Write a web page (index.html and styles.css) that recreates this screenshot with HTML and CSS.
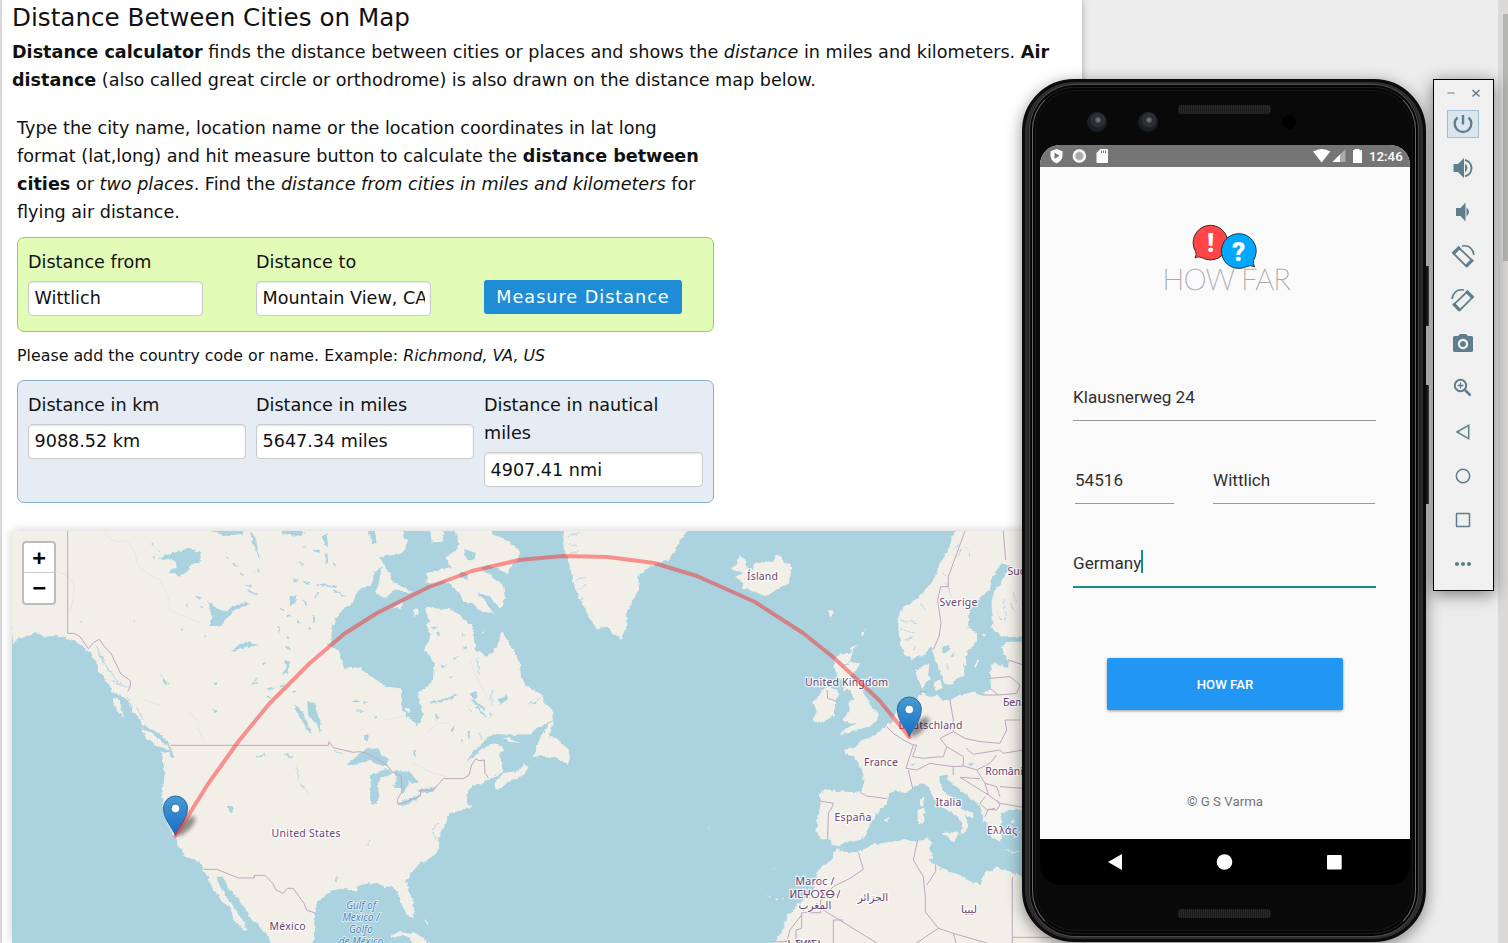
FILE: index.html
```html
<!DOCTYPE html>
<html lang="en">
<head>
<meta charset="utf-8">
<title>Distance Between Cities on Map</title>
<link rel="stylesheet" href="styles.css">
</head>
<body>
<div class="desktop">
<main class="page">
  <h1 class="title">Distance Between Cities on Map</h1>
  <p class="intro"><b>Distance calculator</b> finds the distance between cities or places and shows the <i>distance</i> in miles and kilometers. <b>Air distance</b> (also called great circle or orthodrome) is also drawn on the distance map below.</p>
  <section class="tool">
    <p class="help">Type the city name, location name or the location coordinates in lat long format (lat,long) and hit measure button to calculate the <b>distance between cities</b> or <i>two places</i>. Find the <i>distance from cities in miles and kilometers</i> for flying air distance.</p>
    <div class="panel panel-form">
      <div class="col"><label>Distance from</label><div class="field short">Wittlich</div></div>
      <div class="col"><label>Distance to</label><div class="field short"><span>Mountain View, CA</span></div></div>
      <div class="col end"><button class="measure">Measure Distance</button></div>
    </div>
    <p class="note">Please add the country code or name. Example: <i>Richmond, VA, US</i></p>
    <div class="panel panel-result">
      <div class="col"><label>Distance in km</label><div class="field">9088.52 km</div></div>
      <div class="col"><label>Distance in miles</label><div class="field">5647.34 miles</div></div>
      <div class="col"><label>Distance in nautical miles</label><div class="field low">4907.41 nmi</div></div>
    </div>
  </section>
  <div class="map">
    <svg width="1070" height="412" viewBox="12 531 1070 412">
      <defs>
        <filter id="coast" x="0" y="0" width="3300" height="1290" filterUnits="userSpaceOnUse" color-interpolation-filters="sRGB">
          <feTurbulence type="fractalNoise" baseFrequency="0.065" numOctaves="3" seed="4" result="n"/>
          <feDisplacementMap in="SourceGraphic" in2="n" scale="14" xChannelSelector="R" yChannelSelector="G"/>
        </filter>
        <linearGradient id="pinfill" x1="0" y1="0" x2="0" y2="1"><stop offset="0" stop-color="#4a9bd3"/><stop offset="1" stop-color="#126fc6"/></linearGradient>
        <filter id="soft" x="-50%" y="-100%" width="200%" height="300%"><feGaussianBlur stdDeviation="2.2"/></filter>
        <g id="pin">
          <ellipse cx="10" cy="-10" rx="13" ry="5" transform="rotate(-45 10 -10)" fill="#000" opacity=".42" filter="url(#soft)"/>
          <path d="M0 -.5C-2-7-12-16-12-28A12 12 0 0 1 12-28C12-16 2-7 0-.5Z" fill="url(#pinfill)" stroke="#2a6a9c" stroke-width="1"/>
          <circle cx="0" cy="-27.5" r="4.3" fill="#fff" stroke="#2e6c97" stroke-width=".8"/>
        </g>
      </defs>
      <g transform="translate(0 520) scale(.33333)">
        <g filter="url(#coast)">
          <g class="land">
            <!-- North American mainland -->
            <path d="M20 20L36 375 50 358 75 350 95 345 110 335 135 350 165 347 200 355 225 362 250 380 275 405 290 430 300 460 315 475 330 500 340 520 360 525 385 545 395 570 420 595 425 615 450 625 475 640 495 660 512 680 520 705 518 718 505 700 483 695 490 730 494 760 490 800 486 830 490 870 500 905 515 935 530 960 535 980 550 995 553 1010 575 1015 600 1030 610 1050 625 1075 640 1110 660 1135 665 1145 690 1160 700 1180 700 1200 720 1215 735 1235 743 1228 735 1215 720 1190 705 1165 690 1145 675 1125 660 1100 650 1070 670 1070 680 1090 690 1110 710 1130 725 1155 745 1175 745 1190 770 1210 790 1235 810 1250 815 1290 940 1290 942 1230 945 1190 950 1150 970 1130 990 1115 1015 1107 1040 1108 1060 1113 1075 1110 1065 1100 1080 1095 1110 1090 1140 1093 1155 1105 1175 1100 1190 1112 1200 1135 1205 1155 1220 1185 1235 1193 1243 1175 1240 1150 1228 1115 1218 1085 1228 1065 1260 1030 1285 1018 1310 1000 1317 985 1315 960 1320 940 1340 905 1348 880 1380 872 1415 860 1400 850 1402 820 1415 800 1440 792 1465 778 1490 770 1510 755 1505 740 1502 715 1500 700 1513 690 1505 675 1475 672 1440 690 1420 710 1400 725 1420 695 1450 670 1465 650 1490 642 1540 645 1590 643 1610 625 1640 610 1658 600 1657 565 1630 550 1630 525 1600 512 1575 490 1563 470 1560 435 1545 400 1528 370 1515 345 1506 332 1498 355 1490 385 1475 400 1458 407 1440 395 1422 385 1422 330 1415 315 1390 295 1370 280 1350 265 1340 270 1305 265 1282 260 1278 275 1288 300 1282 320 1290 350 1285 370 1270 390 1295 410 1303 440 1303 470 1285 500 1255 517 1260 545 1268 580 1265 605 1250 615 1225 590 1208 570 1205 530 1203 505 1160 500 1115 470 1080 445 1050 440 1032 447 1018 392 993 380 995 330 1005 300 1020 280 1060 245 1065 230 1080 205 1105 200 1120 180 1120 155 1145 140 1135 200 1125 215 1150 235 1170 225 1185 205 1210 215 1240 220 1215 205 1185 190 1170 165 1140 110 1180 105 1210 95 1223 65 1210 50 1210 20Z"/>
            <!-- Baffin, Greenland, Newfoundland and the smaller Atlantic islands -->
            <path d="M1290 20L1295 68 1325 65 1330 45 1330 20ZM1365 20L1375 70 1370 90 1340 115 1355 145 1320 150 1280 160 1280 190 1310 190 1330 180 1360 200 1380 220 1390 245 1420 255 1450 275 1485 283 1470 260 1450 240 1432 215 1460 225 1485 245 1503 265 1515 230 1510 200 1490 180 1470 165 1445 150 1460 135 1500 150 1525 165 1530 140 1550 125 1563 95 1540 75 1510 55 1480 45 1470 20Z"/>
            <path d="M1692 20L1690 80 1700 110 1710 140 1720 190 1740 240 1755 265 1765 290 1790 325 1820 320 1840 345 1865 357 1878 330 1882 280 1900 240 1917 210 1915 170 1940 145 1970 130 2005 120 2025 90 2040 60 2070 20Z"/>
            <path d="M1662 607L1645 612 1620 655 1598 710 1630 708 1660 712 1680 720 1702 735 1710 715 1705 690 1690 675 1670 655 1648 650ZM1480 790L1484 808 1498 810 1520 788 1565 768 1588 745 1575 728 1560 752 1515 758 1500 770ZM1510 652L1530 655 1557 672 1535 670ZM1180 262L1210 245 1200 268ZM1242 268L1255 265 1255 285 1244 290ZM338 535L360 537 362 560 373 592 350 570ZM422 628L455 637 485 662 515 692 480 685 445 660ZM1168 1250L1195 1234 1250 1240 1310 1290 1260 1290 1220 1248ZM1272 1198L1282 1205 1282 1218ZM1215 563l15 4v8l-13-1zM1445 332l7 3-5 7z"/>
            <!-- Iceland, Faroe, Shetland -->
            <path d="M2218 105L2238 120 2243 145 2260 148 2262 125 2280 130 2300 125 2320 122 2335 103 2350 125 2370 130 2377 160 2365 190 2330 210 2295 228 2265 215 2240 205 2225 208 2230 190 2205 170 2230 160 2195 145 2212 130ZM2485 268l14 2-4 28-6-10zM2580 345l14-20-6 26zM2550 385l18-10-10 22z"/>
            <!-- Great Britain and Ireland -->
            <path d="M2520 400L2558 398 2550 425 2580 430 2565 460 2550 470 2580 500 2597 530 2615 565 2638 575 2630 605 2600 625 2550 635 2515 647 2545 620 2570 613 2545 610 2525 600 2550 572 2545 550 2560 535 2550 510 2530 510 2535 490 2515 470 2500 440 2505 415ZM2480 500L2512 510 2515 525 2505 545 2505 585 2470 605 2435 605 2450 575 2440 545 2455 530 2465 510Z"/>
            <!-- Scandinavia -->
            <path d="M2872 20L2855 60 2840 100 2820 130 2805 170 2780 205 2760 230 2720 255 2695 280 2695 320 2700 360 2710 400 2735 417 2770 405 2795 380 2805 420 2815 445 2830 480 2835 495 2860 492 2870 475 2890 470 2898 430 2900 395 2932 360 2928 340 2905 320 2905 290 2915 260 2940 235 2970 210 2975 180 2990 150 3005 130 3030 135 3020 160 3000 190 2975 225 2975 260 2978 290 2975 325 3000 345 3025 352 3280 335V20ZM2922 440l14-24-6 28zM2945 342l14 0-6 8z"/>
            <!-- Continental Europe -->
            <path d="M3280 365L3030 365 3005 375 3010 395 3025 420 3025 440 3015 445 2995 430 2975 430 2970 460 2973 500 2965 515 2940 525 2920 515 2880 525 2850 540 2830 540 2810 525 2790 535 2776 522 2765 505 2753 480 2750 450 2770 437 2788 430 2785 460 2792 475 2775 490 2765 520 2750 540 2720 545 2690 575 2675 605 2650 620 2640 635 2610 655 2585 660 2580 672 2560 685 2530 690 2535 702 2565 710 2580 735 2590 760 2590 800 2582 818 2540 815 2500 812 2475 808 2455 822 2462 850 2455 890 2448 925 2458 955 2485 955 2500 975 2515 978 2540 965 2575 962 2600 945 2605 920 2630 880 2660 855 2665 820 2690 812 2720 820 2760 790 2785 800 2795 825 2825 860 2860 880 2885 900 2890 925 2880 945 2890 940 2905 920 2900 900 2895 885 2920 893 2920 880 2885 865 2860 840 2835 820 2820 790 2818 770 2840 762 2845 780 2870 800 2910 835 2935 850 2945 870 2945 890 2955 905 2965 930 2975 950 2990 960 3000 965 3005 950 3000 920 3005 900 3000 880 3030 870 3280 870ZM2800 490l22-8 6 25-22 2zM2825 940L2875 935 2867 965 2830 945ZM2750 875L2773 865 2773 905 2758 915ZM2760 840L2770 828 2770 860 2760 855ZM3012 990l50 6-20 4zM2650 900l20-6-10 12zM3035 900l10 6-8 6zM3055 930l9 5-8 5z"/>
            <!-- North Africa -->
            <path d="M2310 1290L2350 1225 2360 1190 2400 1150 2440 1110 2455 1050 2490 1025 2510 985 2530 995 2575 997 2615 975 2670 965 2720 960 2750 965 2780 952 2798 965 2790 985 2800 1015 2785 1020 2805 1035 2840 1050 2880 1065 2900 1080 2940 1095 2955 1060 2990 1042 3030 1055 3070 1070 3280 1080V1290ZM2302 1128l8 2-4 8zM2325 1136l10-2-4 8zM2342 1134l6-6 0 12zM2318 1046l10 0-5 3zM2120 922l10 2-4 3zM2172 940l8 1-3 3z"/>
          </g>
          <g class="water">
            <!-- Arctic inlets and the large northern lakes -->
            <path d="M475 115L520 98 570 85 602 98 600 125 570 135 560 160 540 172 525 160 505 160 530 140 525 122ZM620 240L650 265 675 275 700 258 740 245 748 252 715 265 690 285 660 318 625 318 640 290ZM870 230l18-5-2 25-20 5zM640 36L680 48 725 42 730 20 640 20ZM750 40l15 5 15 70-12-20zM845 40l40 8 30-6-20-22-50 0zM965 50l15-10 5 45-10-15zM1100 20l15 50 15-5-8-45zM695 390L735 365 775 375 730 385 700 395ZM855 420l15 5-5 35-18 5 10-20zM885 555L910 580 935 640 925 635 900 595ZM922 545L942 548 955 590 965 605 960 640 950 610 925 590ZM680 860l12-5 8 15-5 12zM480 455l15 25 15 12-16 2zM1395 85l30 15-5 20-25-5zM1385 155l20 10-5 14-20-10zM640 490l14-4-6 12zM800 505l22-5-12 12z"/>
            <!-- Great Lakes -->
            <path d="M1040 735L1070 705 1100 688 1135 685 1145 705 1165 720 1160 738 1130 730 1110 720 1080 728 1060 735ZM1112 765L1150 750 1180 755 1165 765 1148 770 1132 795 1138 830 1130 852 1115 850 1110 820 1113 780ZM1180 752L1230 755 1255 788 1235 790 1225 780 1225 800 1208 822 1202 805 1182 800 1190 780ZM1192 852L1220 840 1260 825 1250 840 1210 857ZM1250 812L1285 803 1310 797 1300 815 1262 818ZM1092 645l14 0-2 18-12-4z"/>
            <path d="M1285 548L1320 540 1375 522 1350 540 1300 552ZM1410 520l22-5-6 25-10-8zM1495 540l24-16 5 14-24 14zM1582 555l48-26-30 22zM1350 630l18-16-12 24zM1402 630l12 4-8 28zM1305 580l14 12-10 10zM1340 470l20-4-8 8zM1355 412l22-4-12 10zM1320 440l25-8-15 12zM1470 570l8 14-6 4zM1380 660l12-6-6 12zM1290 322l22-2-10 8z"/>
            <path d="M2828 380l20-6 2 16-24 12zM2855 410l8-16 0 18zM2730 735l14-6-4 8zM2905 735l18-8-12 12z"/>
          </g>
          <g class="lakes">
            <path d="M680 110l6 6M700 130l10 8M720 160l14 8M735 195l22 4M740 210l30 14M590 230l12 4M600 260l6 4M540 325l4 3M610 350l8-2M770 150l8 6M900 130l10 6M880 180l14 2M910 185l18 4M950 195l60 6M1000 210l40 20M840 265l10 8M860 285l12 3M940 285l6 20M890 300l8 12M835 320l4 16M860 350l6 6M910 240l6 14M945 230l10-12M790 435l8-4M760 480l12-5M755 495l16-7M800 530l12 6M840 500l14-8M880 520l10-6M860 380l8 10M930 320l6 6M980 100l2 30M1000 130l10 8M910 80l6 2M940 90l20 3M985 370l3 8M455 70l8 8M475 90l6 6M460 110l8 3M400 300l4 2M640 575l10-3M770 710l26-4M850 700l26 12M1010 1070l-5 16M1060 545l20-2M1090 550l12-2M1070 570l22 4M1120 590l8 1M1245 690l2 20M1415 540l40 30M1430 560l26 28M1310 340l10 2M1390 380l12 4M1385 345l6 2M1355 20l10 16"/>
            <path class="fine" d="M560 250l4 10M240 300l8 10M290 380l20 50M300 400l30 60M320 440l40 50M330 480l36 20M350 490l40 10M395 560l-14-30M430 600l-20-40M890 740l8 40M900 790l24 28M1000 690l30 12M1105 960l3 18M1475 510l1 45M1430 415l8 50M1440 640l4 20M1400 560l20 20M1250 430l20 40M1300 930l14-24M1310 960l-14-26M1700 50l40-10M1700 70l30 6M1712 100l24-8M1730 180l30-6M1735 210l20-14M1735 245l16-8M2860 90l20-20M2870 110l16-26M2900 80l10 30M2840 190l14 40M2830 160l20 20M3010 240l8 60M3030 250l14 24M2990 280l16 20M3040 220l10 30M2700 300l50 8M2700 330l44 8M2710 360l30-6M2740 390l10-16M2760 250l20 20M2890 430l4 20M2840 430l6 20M2510 420l20 24M2530 440l20-20"/>
          </g>
        </g>
        <g class="rivers">
          <path d="M315 35Q330 75 380 62Q410 90 410 130Q440 165 480 180Q510 230 510 272L600 308M160 150Q230 170 222 215Q215 260 212 275M430 540l50 15M560 570l40 40M590 620l25 50M1410 420Q1430 480 1480 560M1350 610Q1310 600 1280 640M1240 730l60 30 40 10M1150 600l60-10"/>
        </g>
        <g class="borders">
          <path d="M203 33V340H222L240 350 265 386 280 368 298 358 312 378 334 402 362 461 391 482V500L383 515M512 676H985L987 665 1000 683 1030 690 1060 697 1080 695 1100 700 1140 722 1165 740 1175 755 1203 768 1206 815 1192 838 1195 853 1220 844 1261 828V810H1300L1330 776H1390L1407 765 1415 735 1427 716 1437 722 1453 720 1455 760 1465 773M610 1048H650L715 1074H763V1066H795L818 1090 828 1110 850 1120 862 1105H880L897 1130 912 1150 920 1170 950 1181"/>
          <path d="M2895 33L2845 170V200H2822L2813 240 2823 310 2817 350 2800 388M3010 33L3017 120M2481 510L2483 535 2505 542M2660 620L2680 640 2710 660 2740 675 2750 675 2738 710 2770 715 2800 712 2830 710 2840 680 2820 655 2860 635 2860 600 2850 540M2740 675L2718 745 2750 750 2790 730 2860 740 2890 738 2890 710 2840 680M2582 818L2600 828 2660 836M2458 843L2500 850 2497 860 2485 880 2483 955M2725 750L2738 805M2860 635L2895 655 2940 665 3000 670 3020 630 3015 600 3060 600M2898 685L2920 703 3000 690 3010 700 3070 690M2890 738L2930 750 2970 730 2990 705M2930 750L2955 790 2965 825 2950 815 2880 772 2940 776M2965 825L3000 850 3070 862M2955 790L2990 800 3000 830M3000 800L3070 805M2955 830L2940 850 2960 870 2985 865M2990 840L3000 855 2990 870 2965 868 2955 890M2970 475L3030 470 3060 495 3050 520 2995 525 2970 505M3025 420L3070 435M2995 525H2945M2760 515H2780M2860 740L2860 765"/>
          <path d="M2575 997L2590 1048 2550 1075 2500 1100 2462 1140V1178H2405V1225L2388 1230V1269M2462 1165L2640 1275M2405 1185L2370 1230 2360 1265H2320M2500 1269V1200H2530M2753 960L2740 1020 2770 1070 2776 1130V1175L2815 1225 2740 1275M2780 1095L2807 1055V1035M2815 1225L2860 1240 2980 1275M2860 1240L2870 1275M3037 1072V1275M3037 1252H3280"/>
        </g>
      </g>
      <g class="country">
        <text x="306" y="836.5" textLength="69">United States</text>
        <text x="287.500" y="930" textLength="36">México</text>
        <text x="762.500" y="579.500" textLength="31">Ísland</text>
        <text x="958.500" y="606" textLength="38">Sverige</text>
        <text x="1023" y="575">Suomi</text>
        <text x="846.500" y="686" textLength="83">United Kingdom</text>
        <text x="930.500" y="728.500" textLength="64">Deutschland</text>
        <text x="881" y="766" textLength="34">France</text>
        <text x="853" y="821" textLength="37">España</text>
        <text x="948.500" y="806" textLength="26">Italia</text>
        <text x="1026" y="706">Беларусь</text>
        <text x="1007" y="774.500">România</text>
        <text x="1002" y="834" textLength="30">Ελλάς</text>
        <text x="815" y="885" textLength="39">Maroc /</text>
        <text x="815" y="898" textLength="51">ⵍⵎⵖⵔⵉⴱ /</text>
        <text x="815" y="909">المغرب</text>
        <text x="873" y="901">الجزائر</text>
        <text x="969" y="913">ليبيا</text>
        <text x="804" y="948" textLength="38">ⵜⴰⴳⵍⴷⵉⵜ</text>
      </g>
      <g class="sea">
        <text x="361" y="909">Gulf of</text><text x="361" y="921">Mexico /</text><text x="361" y="933">Golfo</text><text x="361" y="945">de México</text>
      </g>
      <use href="#pin" x="175.500" y="836"/>
      <use href="#pin" x="909.300" y="737"/>
      <path class="route" d="M175.500 836L208 784 238 742 269 704 310 663 344 634 377 613 429 587 472 571 519 560 563 556 608 557 654 563 697 576 755 602 803 633 833 657 879 700 909.300 737"/>
    </svg>
    <div class="zoomer"><span>+</span><span>−</span></div>
  </div>
</main>

<div class="scrollbar"><div class="thumb"></div></div>

<div class="key power"></div><div class="key volume"></div>
<div class="phone">
  <div class="rim"></div>
  <div class="speaker top"></div>
  <div class="lens one"></div><div class="lens two"></div><div class="sensor"></div>
  <div class="screen">
    <div class="status">
      <svg width="90" height="22" viewBox="1040 145 90 22">
        <path d="M1056.500 149l6 2.200v4.300c0 3.700-2.600 6.600-6 7.700-3.400-1.100-6-4-6-7.700v-4.300z" fill="#fff"/><path d="M1054.500 152.500l5 3.200-5 3.200z" fill="#757575"/>
        <circle cx="1079.300" cy="156" r="6.700" fill="#fff"/><circle cx="1079.300" cy="156" r="4.200" fill="#aaa" stroke="#ccc"/>
        <path d="M1100.500 149h6.500q1 0 1 1v12q0 1-1 1h-9.500q-1 0-1-1v-9z" fill="#fff"/><path d="M1101.500 150.500v2.500M1103.500 150.500v2.500M1105.500 150.500v2.500" stroke="#757575"/>
      </svg>
      <span class="fill"></span>
      <svg width="52" height="22" viewBox="1312 145 52 22">
        <path d="M1313 151.500q8.700-5 17.300 0l-8.600 11z" fill="#fff"/>
        <path d="M1345.500 149v13h-13z" fill="#aaa"/><path d="M1340 154.500v7.500h-7.500z" fill="#fff"/>
        <path d="M1354.500 149h5v1.300h2.500v12.700h-9v-12.700h1.500z" fill="#fff"/>
      </svg>
      <span class="clock">12:46</span>
    </div>
    <div class="app">
      <svg class="logo" width="140" height="74" viewBox="1155 220 140 74">
        <path d="M1195.600 251.500A17.300 17.300 0 1 1 1202 257.700Q1198.500 256 1195 257.800Q1197 255 1195.600 251.500Z" fill="#ff4545" stroke="#222" stroke-width=".9"/>
        <path d="M1253.600 260.200A17.400 17.400 0 1 0 1246.800 266.500Q1250.500 264.700 1254.700 266.800Q1252.600 263.500 1253.600 260.200Z" fill="#00a8ff" stroke="#222" stroke-width=".9"/>
        <text class="mark" x="1210.500" y="251.500">!</text><text class="mark" x="1238.700" y="261">?</text>
        <text class="word" x="1162.500" y="289.500" textLength="128">HOW FAR</text>
      </svg>
      <div class="line street">Klausnerweg 24</div>
      <div class="pair"><div class="line zip">54516</div><div class="line city">Wittlich</div></div>
      <div class="line country-in"><span>Germany</span><i class="caret"></i></div>
      <button class="go">HOW FAR</button>
      <div class="credit">© G S Varma</div>
    </div>
    <div class="nav">
      <svg width="370" height="46" viewBox="1040 839 370 46" fill="#fff"><path d="M1108 862l14-8v16z"/><circle cx="1224.500" cy="862" r="7.800"/><rect x="1327" y="855" width="14.700" height="14.500" rx="1"/></svg>
    </div>
  </div>
  <div class="speaker bottom"></div>
</div>

<aside class="emu">
  <svg width="59" height="510" viewBox="1434 80 59 510" fill="none" stroke="#607d8b" stroke-width="2">
    <path d="M1447.500 93h7" stroke="#9fb0b8" stroke-width="1.800"/><path d="M1472.500 90l7 6.500M1479.500 90l-7 6.500" stroke-width="1.500"/>
    <rect x="1447.500" y="110.500" width="31" height="27" fill="#dae6ee" stroke="#a3bccd" stroke-width="1"/>
    <path d="M1463 115v9.500M1457.500 117.500a8.300 8.300 0 1 0 11 0" stroke-width="2.400"/>
    <g fill="#607d8b" stroke="none"><path d="M1453.500 164h4.500l6-6v20l-6-6h-4.500zM1465 163.500q5 4.500 0 9z"/><path d="M1456 208h4.500l5-5.500v19l-5-5.500h-4.500zM1466.500 207.500q5 4.500 0 9z"/></g>
    <path d="M1465 160a8.300 8.300 0 0 1 0 16.200"/>
    <g id="rot"><path d="M1459.200 248L1453.600 253.600 1466 266 1471.800 260.200Z" stroke-width="1.800"/><path d="M1452.800 254l7-7M1465.800 266.600l7-7" stroke-width="3.200"/><path d="M1462 246q10-1.500 12 9" stroke-width="1.600"/></g>
    <use href="#rot" transform="translate(2926 44) scale(-1 1)"/>
    <path fill="#607d8b" stroke="none" fill-rule="evenodd" d="M1454.500 336h3.500l2-2h6l2 2h3.500q1.500 0 1.500 1.500v13q0 1.500-1.500 1.500h-17q-1.500 0-1.500-1.500v-13q0-1.500 1.500-1.500zM1463 338.800a5.200 5.200 0 1 0 .01 0zM1463 341a3 3 0 1 1-.01 0z"/>
    <circle cx="1460.500" cy="385.500" r="5.700"/><path d="M1465 390l5.500 5.500" stroke-width="2.500"/><path d="M1457.500 385.500h6M1460.500 382.500v6" stroke-width="1.400"/>
    <g stroke-width="1.500"><path d="M1457 432l11.700-6.800v13.600z"/><circle cx="1463" cy="476" r="6.700"/><rect x="1456.500" y="513.500" width="13" height="13" rx=".5"/></g>
    <g fill="#607d8b" stroke="none"><circle cx="1457" cy="564" r="2.100"/><circle cx="1463" cy="564" r="2.100"/><circle cx="1469" cy="564" r="2.100"/></g>
  </svg>
</aside>
</div>
</body>
</html>
```

FILE: styles.css
```css
* { box-sizing: border-box; }
body { margin: 0; font-family: "DejaVu Sans", sans-serif; font-size: 17.6px; line-height: 28px; color: #111; }
.desktop { position: relative; width: 1508px; height: 943px; overflow: hidden; background: #ededed; display: flex; justify-content: space-between; }
.page { width: 1082px; height: 943px; padding-left: 10px; border-left: 2px solid #d8d8d8; background: #fff; box-shadow: 0 0 7px rgba(0,0,0,.3); overflow: hidden; }
.title { margin: 0; font-size: 24.64px; font-weight: 400; line-height: 36px; height: 38px; }
.intro { margin: 0; width: 1050px; height: 76px; }
.tool { margin-left: 5px; width: 697px; }
.help { margin: 0; height: 123px; }
.panel { display: grid; grid-template-columns: 218px 218px 219px; gap: 10px; padding: 10px 10px 0; border: 1px solid; border-radius: 7px; }
.panel-form { height: 95px; background: #e2fcb8; border-color: #a5c45e; }
.panel-result { height: 123px; background: #e5ecf3; border-color: #85add0; }
.col label { display: block; }
.field { height: 35px; margin-top: 5px; padding: 0 5.500px; border: 1px solid #ccc; border-radius: 4px; background: #fff; box-shadow: inset 0 1px 2px rgba(0,0,0,.12); line-height: 32px; white-space: nowrap; overflow: hidden; }
.field.short { width: 175px; }
.field.low { line-height: 34px; }
.field span { display: block; overflow: hidden; }
.measure { display: block; width: 198px; height: 34px; margin-top: 32px; padding: 0; border: 0; border-radius: 3px; background: #1f8dd6; color: #fff; font: 17.6px "DejaVu Sans", sans-serif; letter-spacing: 1px; }
.note { margin: 0; padding-top: 10px; height: 48px; font-size: 15.84px; }
.map { position: relative; margin-top: 28px; width: 1070px; height: 412px; background: #aad3df; box-shadow: 0 0 10px rgba(0,0,0,.2); }
.map svg { display: block; }
.land { fill: #f2efe9; }
.water { fill: #aad3df; }
.lakes { fill: none; stroke: #aad3df; stroke-width: 5; }
.lakes .fine { stroke-width: 2.500; }
.rivers { fill: none; stroke: #dbe6e6; stroke-width: 2.500; }
.borders { fill: none; stroke: #c0a6bd; stroke-width: 3; stroke-linejoin: round; }
.country text { font: 10.500px "Noto Sans", "DejaVu Sans", sans-serif; fill: #6b4470; stroke: #fff; stroke-opacity: .75; stroke-width: 2.500px; paint-order: stroke; text-anchor: middle; }
.sea text { font: italic 10px "Noto Sans", sans-serif; fill: #5484b8; stroke: #e3f0f4; stroke-width: 1.500px; paint-order: stroke; text-anchor: middle; }
.route { fill: none; stroke: #ff2222; stroke-opacity: .46; stroke-width: 4; stroke-linejoin: round; stroke-linecap: round; }
.zoomer { position: absolute; left: 10px; top: 10px; width: 34px; height: 64px; border: 2px solid #bfbdb8; border-radius: 4px; background: #fff; }
.zoomer span { display: block; height: 30px; text-align: center; font: bold 22px/30px "DejaVu Sans Mono", monospace; color: #000; }
.zoomer span:first-child { border-bottom: 1px solid #ccc; }
.scrollbar { width: 10px; height: 943px; padding: 14px 0 0 5px; background: #dcdad8; }
.thumb { height: 247px; background: #b5b5b3; }

.phone { position: absolute; left: 1022px; top: 79px; width: 404px; height: 863px; border-radius: 52px; background: #090909; border: 3px solid #0b0b0b; box-shadow: inset 0 0 0 3px #2d2d2d, inset 0 0 0 5px #1b1b1b, 0 4px 16px rgba(0,0,0,.45); }
.rim { position: absolute; inset: 5px 7px; border: 1.500px solid #66666c; border-top-color: #1c1c1c; border-bottom-color: #1c1c1c; border-radius: 43px; box-shadow: 0 0 0 2px #050505, 0 0 0 3px #4c4c4c, inset 0 0 0 2px #050505, inset 0 0 0 3px #17171a; }
.speaker { position: absolute; left: 153px; width: 93px; height: 9px; border-radius: 4px; background: repeating-linear-gradient(90deg, #1b1b1b 0 1px, #292929 1px 2px); }
.speaker.top { top: 23px; }
.speaker.bottom { top: 827px; }
.lens { position: absolute; top: 30px; width: 20px; height: 20px; border-radius: 50%; background: radial-gradient(circle at 55% 40%, #777 0 5%, #24272b 25%, #333 35%, #1a2027 50%, #161d24 70%); }
.lens.one { left: 62px; }
.lens.two { left: 113px; }
.sensor { position: absolute; left: 257px; top: 33px; width: 14px; height: 14px; border-radius: 50%; background: #000; }
.key { position: absolute; left: 1423px; width: 6px; background: #222; border-right: 1px solid #555; border-radius: 1px; }
.key.power { top: 266px; height: 60px; }
.key.volume { top: 385px; height: 119px; }
.screen { position: absolute; left: 15px; top: 63px; width: 370px; height: 740px; border-radius: 20px; overflow: hidden; background: linear-gradient(#fafafa 90%, #090909 90%); font-family: Roboto, sans-serif; display: flex; flex-direction: column; }
.status { height: 22px; display: flex; background: #757575; color: #fff; }
.fill { flex: 1; }
.clock { width: 46px; padding-left: 5px; font-size: 13.300px; font-weight: 500; line-height: 23px; white-space: nowrap; }
.app { flex: 1; padding: 0 33px; color: #303030; background: #fafafa; font-size: 17.1px; display: flex; flex-direction: column; }
.logo { margin: 53px 0 0 82px; flex: none; }
.mark { font: 900 26px Roboto, sans-serif; fill: #fff; text-anchor: middle; }
.word { font: 100 29px Lato, sans-serif; fill: #aaa; stroke: #aaa; stroke-width: .55px; }
.line { height: 37px; line-height: 26px; border-bottom: 1px solid #999; }
.street { margin-top: 90px; width: 303px; }
.pair { display: flex; justify-content: space-between; margin: 46px 2px 0 2px; width: 300px; }
.zip { width: 99px; }
.city { width: 162px; }
.country-in { display: flex; width: 303px; height: 38px; margin-top: 46px; border-bottom: 2px solid #159483; }
.caret { width: 2px; height: 23px; background: #159483; }
.go { width: 236px; height: 52px; margin: 70px 0 0 34px; flex: none; border: 0; border-radius: 2px; background: #2196f3; color: #fff; font: 500 13.200px Roboto, sans-serif; box-shadow: 0 1px 3px rgba(0,0,0,.4); }
.credit { margin-top: 78px; text-align: center; font-size: 13.300px; color: #757575; }
.nav { height: 46px; background: #000; }
.nav svg { display: block; }
.emu { position: absolute; left: 1433px; top: 79px; width: 61px; height: 512px; border: 1px solid #000; background: #f0f0f0; box-shadow: 0 3px 16px rgba(0,0,0,.5); }
.emu svg { display: block; }
```
